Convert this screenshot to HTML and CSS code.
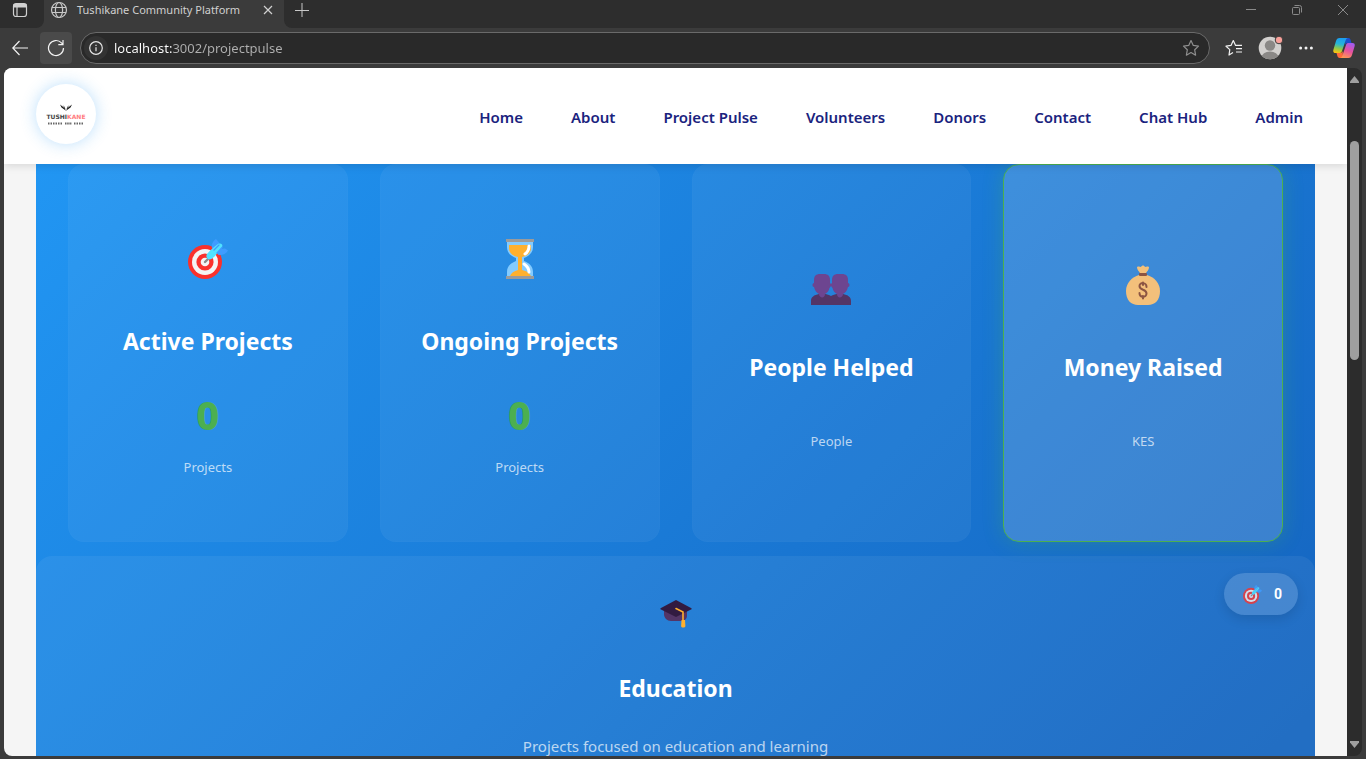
FILE: index.html
```html
<!DOCTYPE html>
<html lang="en">
<head>
<meta charset="utf-8">
<title>Tushikane Community Platform</title>
<link rel="stylesheet" href="styles.css">
</head>
<body>
<svg class="defs" aria-hidden="true">
  <symbol id="target" viewBox="0 0 40 40">
    <circle cx="17" cy="23" r="17" fill="#fa312c"/>
    <circle cx="17" cy="23" r="13" fill="#f4f4f4"/>
    <circle cx="17" cy="23" r="8.600" fill="#fa312c"/>
    <circle cx="17" cy="23" r="4.300" fill="#f4f4f4"/>
    <path d="M17 23l3-3" stroke="#8a8a8a" stroke-width="2.400" stroke-linecap="round"/>
    <path d="M24 9c-1-3.500 1-7 4-9l3 3.500V9l-4 3zM29 14l3-4 5-.5 3 2c-2 3.500-5.500 5-9.500 4.500z" fill="#3f9cff"/>
    <path d="M19 15c3-4 7-7 11-10 1.500-.7 3.200-.5 4 .5.600 1 .4 2.500-.5 3.500-3 4-6 8-10 11-3.500 1.500-6.500-1.500-4.500-5z" fill="#50e2ff"/>
    <path d="M26 11l5-5M29 14l5-5.500" stroke="#3f9cff" stroke-width="1.300" stroke-linecap="round"/>
  </symbol>
</svg>

<div class="titlebar">
  <div class="titlebar-start">
    <button class="bare" aria-label="Tab actions">
      <svg width="16" height="16" viewBox="0 0 16 16" fill="none" stroke="#d0d0d0" stroke-width="1.200"><rect x="1.500" y="1.500" width="13" height="13" rx="2.500"/><path d="M1.500 3h13M1.500 4.500h13" stroke-width="2"/><path d="M5 5v9.500"/></svg>
    </button>
  </div>
  <div class="tab">
    <svg width="18" height="18" viewBox="0 0 18 18" fill="none" stroke="#c8c8c8" stroke-width="1.200"><circle cx="9" cy="9" r="7.500"/><ellipse cx="9" cy="9" rx="3.600" ry="7.500"/><path d="M2 6.500h14M2 11.500h14"/></svg>
    <span class="tab-title">Tushikane Community Platform</span>
    <button class="bare" aria-label="Close tab">
      <svg width="10" height="10" viewBox="0 0 10 10" stroke="#d0d0d0" stroke-width="1.200"><path d="M1 1l8 8M9 1L1 9"/></svg>
    </button>
  </div>
  <div class="titlebar-end">
    <button class="bare" aria-label="New tab">
      <svg width="14" height="14" viewBox="0 0 14 14" stroke="#c8c8c8"><path d="M7 0v14M0 7.500h14"/></svg>
    </button>
    <div class="window-controls">
      <button class="bare" aria-label="Minimize"><svg width="10" height="10" viewBox="0 0 10 10" stroke="#8a8a8a"><path d="M0 4.500h10"/></svg></button>
      <button class="bare" aria-label="Restore"><svg width="10" height="10" viewBox="0 0 10 10" fill="none" stroke="#8a8a8a"><rect x=".5" y="2.500" width="7" height="7" rx="1"/><path d="M2.500 .5h5a2 2 0 0 1 2 2v5"/></svg></button>
      <button class="bare" aria-label="Close window"><svg width="10" height="10" viewBox="0 0 10 10" stroke="#8a8a8a"><path d="M0 0l10 10M10 0L0 10"/></svg></button>
    </div>
  </div>
</div>

<div class="toolbar">
  <button class="tool" aria-label="Back">
    <svg width="16" height="16" viewBox="0 0 16 16" fill="none" stroke="#f2f2f2" stroke-width="1.200"><path d="M16 8H.8M7.500 1L.8 8l6.700 7"/></svg>
  </button>
  <button class="tool tool-active" aria-label="Refresh">
    <svg width="18" height="18" viewBox="0 0 18 18" fill="none" stroke="#f2f2f2" stroke-width="1.200"><path d="M16.500 9a7.500 7.500 0 1 1-2-5.100L16 5.500M16 1v4.700h-4.700"/></svg>
  </button>
  <div class="address">
    <button class="info" aria-label="Site information">
      <svg width="14" height="14" viewBox="0 0 14 14" fill="none" stroke="#e6e6e6" stroke-width="1.200"><circle cx="7" cy="7" r="6.300"/><path d="M7 6.200v4M7 3.700v1.400"/></svg>
    </button>
    <input class="url" type="text" aria-label="Address" value="localhost:3002/projectpulse">
    <button class="bare" aria-label="Add to favorites">
      <svg width="18" height="18" viewBox="0 0 18 18" fill="none" stroke="#8f8f8f" stroke-width="1.200" stroke-linejoin="round"><path d="M9 1.500l2.300 4.900 5.200.7-3.800 3.700.9 5.400L9 13.600l-4.600 2.600.9-5.400-3.800-3.700 5.200-.7z"/></svg>
    </button>
  </div>
  <div class="tools-end">
    <button class="bare" aria-label="Favorites">
      <svg width="18" height="18" viewBox="0 0 18 18" fill="none" stroke="#f2f2f2" stroke-width="1.200" stroke-linejoin="round"><path d="M8 13.500L4 16l.8-5.400L1 7.200l5-.8L8.300 1.500l2.300 4.900h6.400M11 9.700h6M11 13h6"/></svg>
    </button>
    <button class="bare" aria-label="Profile">
      <svg width="26" height="26" viewBox="0 0 26 26"><clipPath id="face"><circle cx="13" cy="13" r="11.300"/></clipPath><g clip-path="url(#face)"><rect width="26" height="26" fill="#d2d0ce"/><circle cx="13" cy="10.500" r="5.200" fill="#8a8886"/><ellipse cx="13" cy="22.500" rx="8.500" ry="6" fill="#8a8886"/></g><circle cx="22" cy="5" r="3.800" fill="#f9a19a" stroke="#3b3b3b"/></svg>
    </button>
    <button class="bare more" aria-label="Settings and more">
      <svg width="14" height="4" viewBox="0 0 14 4" fill="#f2f2f2"><circle cx="1.600" cy="2" r="1.500"/><circle cx="7" cy="2" r="1.500"/><circle cx="12.400" cy="2" r="1.500"/></svg>
    </button>
    <button class="bare" aria-label="Copilot">
      <svg width="22" height="22" viewBox="0 0 22 22">
        <defs>
          <linearGradient id="cool" x1=".5" y1="0" x2=".3" y2="1"><stop offset="0" stop-color="#1b9df0"/><stop offset=".4" stop-color="#26b5d8"/><stop offset=".7" stop-color="#8ccb4e"/><stop offset="1" stop-color="#ffc20e"/></linearGradient>
          <linearGradient id="warm" x1=".7" y1="0" x2=".3" y2="1"><stop offset="0" stop-color="#a25bf0"/><stop offset=".5" stop-color="#e8519e"/><stop offset="1" stop-color="#ff9852"/></linearGradient>
        </defs>
        <path d="M12 1h3.500c1.200 0 1.800.8 2.100 1.900L18.500 6H15c-1.500 0-2.200.7-2.700 2z" fill="#1b4fd0"/>
        <path d="M10 21H6.500c-1.200 0-1.800-.8-2.100-1.900L3.500 16H7c1.500 0 2.200-.7 2.700-2z" fill="#ff6a3c"/>
        <path d="M6.500 1H15c-1.300.2-1.900 1-2.400 2.400L9 14c-.5 1.500-1.200 2-2.700 2H2.500C.6 16-.1 14.700.4 12.800L3 4C3.600 2 4.600 1 6.500 1z" fill="url(#cool)"/>
        <path d="M15.500 21H7c1.300-.2 1.900-1 2.400-2.400L13 8c.5-1.500 1.200-2 2.700-2h3.800c1.900 0 2.600 1.300 2.100 3.200L19 18c-.6 2-1.600 3-3.500 3z" fill="url(#warm)"/>
      </svg>
    </button>
  </div>
</div>

<div class="viewport">
  <div class="page">
    <header class="site-header">
      <a class="logo" href="#" aria-label="Tushikane home">
        <svg width="12" height="7" viewBox="0 0 12 7" fill="#1c1c1c"><path d="M6 7L4.800 4.300 0 .5l1.500 3L5 6zM6 7l1.200-2.700L12 .5l-1.500 3L7 6zM2.500 1l2.300 2L5.500 5zM9.500 1L7.200 3 6.500 5z"/></svg>
        <span class="logo-name">TUSHI<span class="logo-accent">KANE</span></span>
        <svg width="36" height="3" viewBox="0 0 36 3" stroke="#666" stroke-width="2"><path d="M0 1.500h15" stroke-dasharray="1.500 1"/><path d="M17 1.500h7" stroke-dasharray="1.500 .7"/><path d="M26 1.500h10" stroke-dasharray="1.500 1"/></svg>
      </a>
      <nav class="site-nav">
        <a href="#">Home</a><a href="#">About</a><a href="#">Project Pulse</a><a href="#">Volunteers</a><a href="#">Donors</a><a href="#">Contact</a><a href="#">Chat Hub</a><a href="#">Admin</a>
      </nav>
    </header>

    <main class="pulse">
      <section class="stats">
        <article class="card">
          <div class="card-icon"><svg width="40" height="40"><use href="#target"/></svg></div>
          <h2>Active Projects</h2>
          <p class="value">0</p>
          <p class="unit">Projects</p>
        </article>
        <article class="card">
          <div class="card-icon">
            <svg width="40" height="40" viewBox="0 0 40 40"><path d="M7 2h26v6c0 6-4 9-9 11v3c5 2 9 5 9 11v5H7v-5c0-6 4-9 9-11v-3C11 17 7 14 7 8z" fill="#83cbff"/><path d="M9 6h22v3c0 5-4 8-9 9v13c5 1 7 3 9 6H10c1-3 4-5 8-6V18c-5-1-9-4-9-9z" fill="#ffb02e"/><path d="M29 7c0 4-1 6-4 8M24 25c3 2 5 4 5 8" stroke="#fff" stroke-width="3" stroke-linecap="round" fill="none"/><path d="M6 0h28v3H6zM6 37h28v3H6z" fill="#9b9b9b"/></svg>
          </div>
          <h2>Ongoing Projects</h2>
          <p class="value">0</p>
          <p class="unit">Projects</p>
        </article>
        <article class="card">
          <div class="card-icon">
            <svg width="40" height="40" viewBox="0 -4 40 40"><path d="M0 36v-4c0-4 3-6 8-7h6c2 0 4 1 6 2 2-1 4-2 6-2h6c5 1 8 3 8 7v4z" fill="#533566"/><path d="M3 11c0-4 2-6 6-6h4c4 0 6 2 6 6v3l1 1 1-1v-3c0-4 2-6 6-6h4c4 0 6 2 6 6v3c2 0 2 4 0 4-1 4-3 6-5 7 0 4-6 5-6 0-2-1-4-3-4.500-6L20 17l-1.500 2c-.5 3-2.500 5-4.500 6 0 5-6 4-6 0-2-1-4-3-5-7-2 0-2-4 0-4z" fill="#6d4590"/></svg>
          </div>
          <h2>People Helped</h2>
          <p class="value"></p>
          <p class="unit">People</p>
        </article>
        <article class="card card-highlight">
          <div class="card-icon">
            <svg width="40" height="40" viewBox="0 0 40 40"><path d="M14 2c2-1 3 0 4 0 1-2 3-2 4 0 1 0 2-1 4 0 0 3-2 4-3 6h-6c-1-2-3-3-3-6z" fill="#f3c07b"/><path d="M16 10h8c7 2 13 8 13 16 0 9-5 14-12 14H15C8 40 3 35 3 26c0-8 6-14 13-16z" fill="#f3c07b"/><rect x="16" y="8" width="8" height="3" rx="1" fill="#8c5543"/><path d="M23.500 22c0-5-7-5-7-1 0 5 7 2.500 7 7.500 0 4.500-7 4.500-7-.5M20 17.500V20M20 31v2.500" stroke="#8c5543" stroke-width="2" stroke-linecap="round" fill="none"/></svg>
          </div>
          <h2>Money Raised</h2>
          <p class="value"></p>
          <p class="unit">KES</p>
        </article>
      </section>

      <section class="category">
        <div class="category-icon">
          <svg width="32" height="32" viewBox="0 0 32 32"><path d="M4 11h23v7c0 3-3 5-6 5H11c-4 0-7-3-7-7z" fill="#533566"/><path d="M16 2l15 8c1 .5 1 1 0 1.500L16 19 1 11.500C0 11 0 10.500 1 10z" fill="#321b41"/><path d="M16 10.500l7 3.500v9" stroke="#ffb02e" stroke-width="1.600" stroke-linecap="round" fill="none"/><path d="M21.500 22h3.500l.4 6c0 2-4.300 2-4.300 0z" fill="#ffb02e"/></svg>
        </div>
        <h2>Education</h2>
        <p>Projects focused on education and learning</p>
      </section>
    </main>

    <div class="badge"><svg width="19" height="19"><use href="#target"/></svg><span>0</span></div>
  </div>
  <div class="scrollbar">
    <svg width="9" height="7" viewBox="0 0 9 7" fill="#9f9f9f"><path d="M4.500 0L9 5.500V7H0V5.500z"/></svg>
    <div class="track"><div class="thumb"></div></div>
    <svg width="9" height="7" viewBox="0 0 9 7" fill="#9f9f9f"><path d="M4.500 7L9 1.500V0H0v1.500z"/></svg>
  </div>
</div>
</body>
</html>
```
FILE: styles.css
```css
* { box-sizing: border-box; }

body {
  margin: 0;
  height: 100vh;
  display: flex;
  flex-direction: column;
  overflow: hidden;
  background: #3b3b3b;
  font-family: "Segoe UI", "Noto Sans", "Open Sans", sans-serif;
}

h2, p { margin: 0; }
svg { display: block; flex: none; }
button { font: inherit; cursor: pointer; }

.defs { position: absolute; width: 0; height: 0; }

.bare {
  padding: 0;
  border: 0;
  background: none;
}

/* Browser title bar */
.titlebar {
  display: flex;
  flex: none;
  height: 28px;
  color: #d0d0d0;
}

.titlebar-start,
.titlebar-end {
  display: flex;
  align-items: center;
  padding-bottom: 8px;
  background: #2d2d2d;
}

.titlebar-start {
  width: 44px;
  padding-left: 12px;
  border-bottom-right-radius: 8px;
}

.titlebar-end {
  flex: 1;
  justify-content: space-between;
  padding-left: 11px;
  padding-right: 18px;
  border-bottom-left-radius: 8px;
}

.tab {
  display: flex;
  align-items: center;
  width: 240px;
  padding: 0 11px 8px 6px;
  gap: 9px;
}

.tab-title {
  flex: 1;
  font-size: 11px;
  line-height: 16px;
  white-space: nowrap;
}

.window-controls { display: flex; gap: 36px; }

/* Browser toolbar */
.toolbar {
  display: flex;
  align-items: center;
  flex: none;
  height: 40px;
  padding: 0 11px 0 4px;
  gap: 4px;
}

.tool {
  display: grid;
  place-items: center;
  width: 32px;
  height: 32px;
  padding: 0;
  border: 0;
  border-radius: 4px;
  background: none;
}

.tool-active { background: #4a4a4a; }

.address {
  display: flex;
  align-items: center;
  flex: 1;
  height: 32px;
  margin-left: 4px;
  padding: 0 9px 0 3px;
  gap: 6px;
  border: 1px solid #6a6a6a;
  border-radius: 16px;
  background: #292929;
}

.info {
  display: grid;
  place-items: center;
  width: 24px;
  height: 24px;
  padding: 0;
  border: 0;
  border-radius: 50%;
  background: #333;
}

.url {
  flex: 1;
  min-width: 0;
  padding: 0;
  border: 0;
  outline: 0;
  font: 13px/20px "Segoe UI", "Noto Sans", sans-serif;
  color: transparent;
  background: linear-gradient(90deg, #fff 58px, #b0b0b0 58px);
  -webkit-background-clip: text;
  background-clip: text;
}

.tools-end {
  display: flex;
  align-items: center;
  margin-left: 11px;
  gap: 14px;
}

.more { padding: 0 6px 0 2px; }

/* Page viewport */
.viewport {
  display: flex;
  flex: 1;
  min-height: 0;
  margin: 0 4px 3px;
  border-radius: 8px;
  overflow: hidden;
  background: #2c2c2c;
}

.page {
  position: relative;
  flex: 1;
  overflow: hidden;
  background: #f5f5f5;
}

.site-header {
  position: relative;
  z-index: 1;
  display: flex;
  align-items: center;
  justify-content: space-between;
  height: 96px;
  padding: 0 44px 4px 32px;
  background: #fff;
  box-shadow: 0 2px 8px rgba(0, 0, 0, 0.12);
}

.logo {
  display: flex;
  flex-direction: column;
  align-items: center;
  justify-content: center;
  width: 60px;
  height: 60px;
  gap: 2px;
  border-radius: 50%;
  background: #fff;
  box-shadow: 0 0 16px rgba(33, 150, 243, 0.3);
  text-decoration: none;
}

.logo-name {
  font: 700 6px/7px "DejaVu Sans", sans-serif;
  color: #444;
}

.logo-accent { color: #ff7b80; }

.site-nav {
  display: flex;
  gap: 48px;
  padding-top: 6px;
}

.site-nav a {
  font-size: 15px;
  line-height: 24px;
  font-weight: 600;
  color: #1a237e;
  text-decoration: none;
}

.pulse {
  min-height: 1000px;
  margin: 0 32px;
  background: linear-gradient(135deg, #2196f3, #1976d2 50%, #1565c0 80%);
  color: #fff;
}

.stats {
  display: grid;
  grid-template-columns: repeat(4, 1fr);
  gap: 32px;
  padding: 0 32px 14px;
}

.card {
  display: flex;
  flex-direction: column;
  align-items: center;
  justify-content: center;
  min-height: 378px;
  border: 1px solid rgba(255, 255, 255, 0.01);
  border-radius: 16px;
  background: rgba(255, 255, 255, 0.05);
}

.card-highlight {
  border-color: #4caf50;
  background: rgba(255, 255, 255, 0.16);
  box-shadow: 0 0 20px rgba(76, 175, 80, 0.3);
}

.card-icon {
  display: grid;
  place-items: center;
  height: 64px;
  padding-bottom: 4px;
}

.card h2,
.category h2 {
  margin: 32px 0;
  font-size: 23px;
  line-height: 32px;
  font-weight: 700;
}

.value {
  margin-bottom: 16px;
  font-size: 40px;
  line-height: 52px;
  font-weight: 800;
  color: #4caf50;
}

.unit {
  font-size: 13px;
  line-height: 20px;
  color: rgba(255, 255, 255, 0.7);
}

.category {
  display: flex;
  flex-direction: column;
  align-items: center;
  min-height: 400px;
  padding-top: 32px;
  border-radius: 16px;
  background: rgba(255, 255, 255, 0.06);
}

.category-icon {
  display: grid;
  place-items: center;
  height: 52px;
}

.category p {
  font-size: 15px;
  line-height: 20px;
  color: rgba(255, 255, 255, 0.7);
}

/* Floating project counter */
.badge {
  position: absolute;
  right: 49px;
  bottom: 141px;
  display: flex;
  align-items: center;
  height: 42px;
  padding: 0 16px 0 19px;
  gap: 12px;
  border-radius: 21px;
  background: rgba(255, 255, 255, 0.16);
  box-shadow: 0 4px 12px rgba(0, 0, 0, 0.12);
  color: #fff;
  font: 700 14px/20px "Roboto", sans-serif;
}

.badge svg { opacity: 0.8; }

/* Scrollbar */
.scrollbar {
  display: flex;
  flex-direction: column;
  align-items: center;
  width: 15px;
  padding: 8px 0;
}

.track {
  display: flex;
  flex-direction: column;
  flex: 1;
  padding: 58px 0 8px;
}

.thumb {
  width: 9px;
  height: 37%;
  border-radius: 5px;
  background: #9f9f9f;
}
```
